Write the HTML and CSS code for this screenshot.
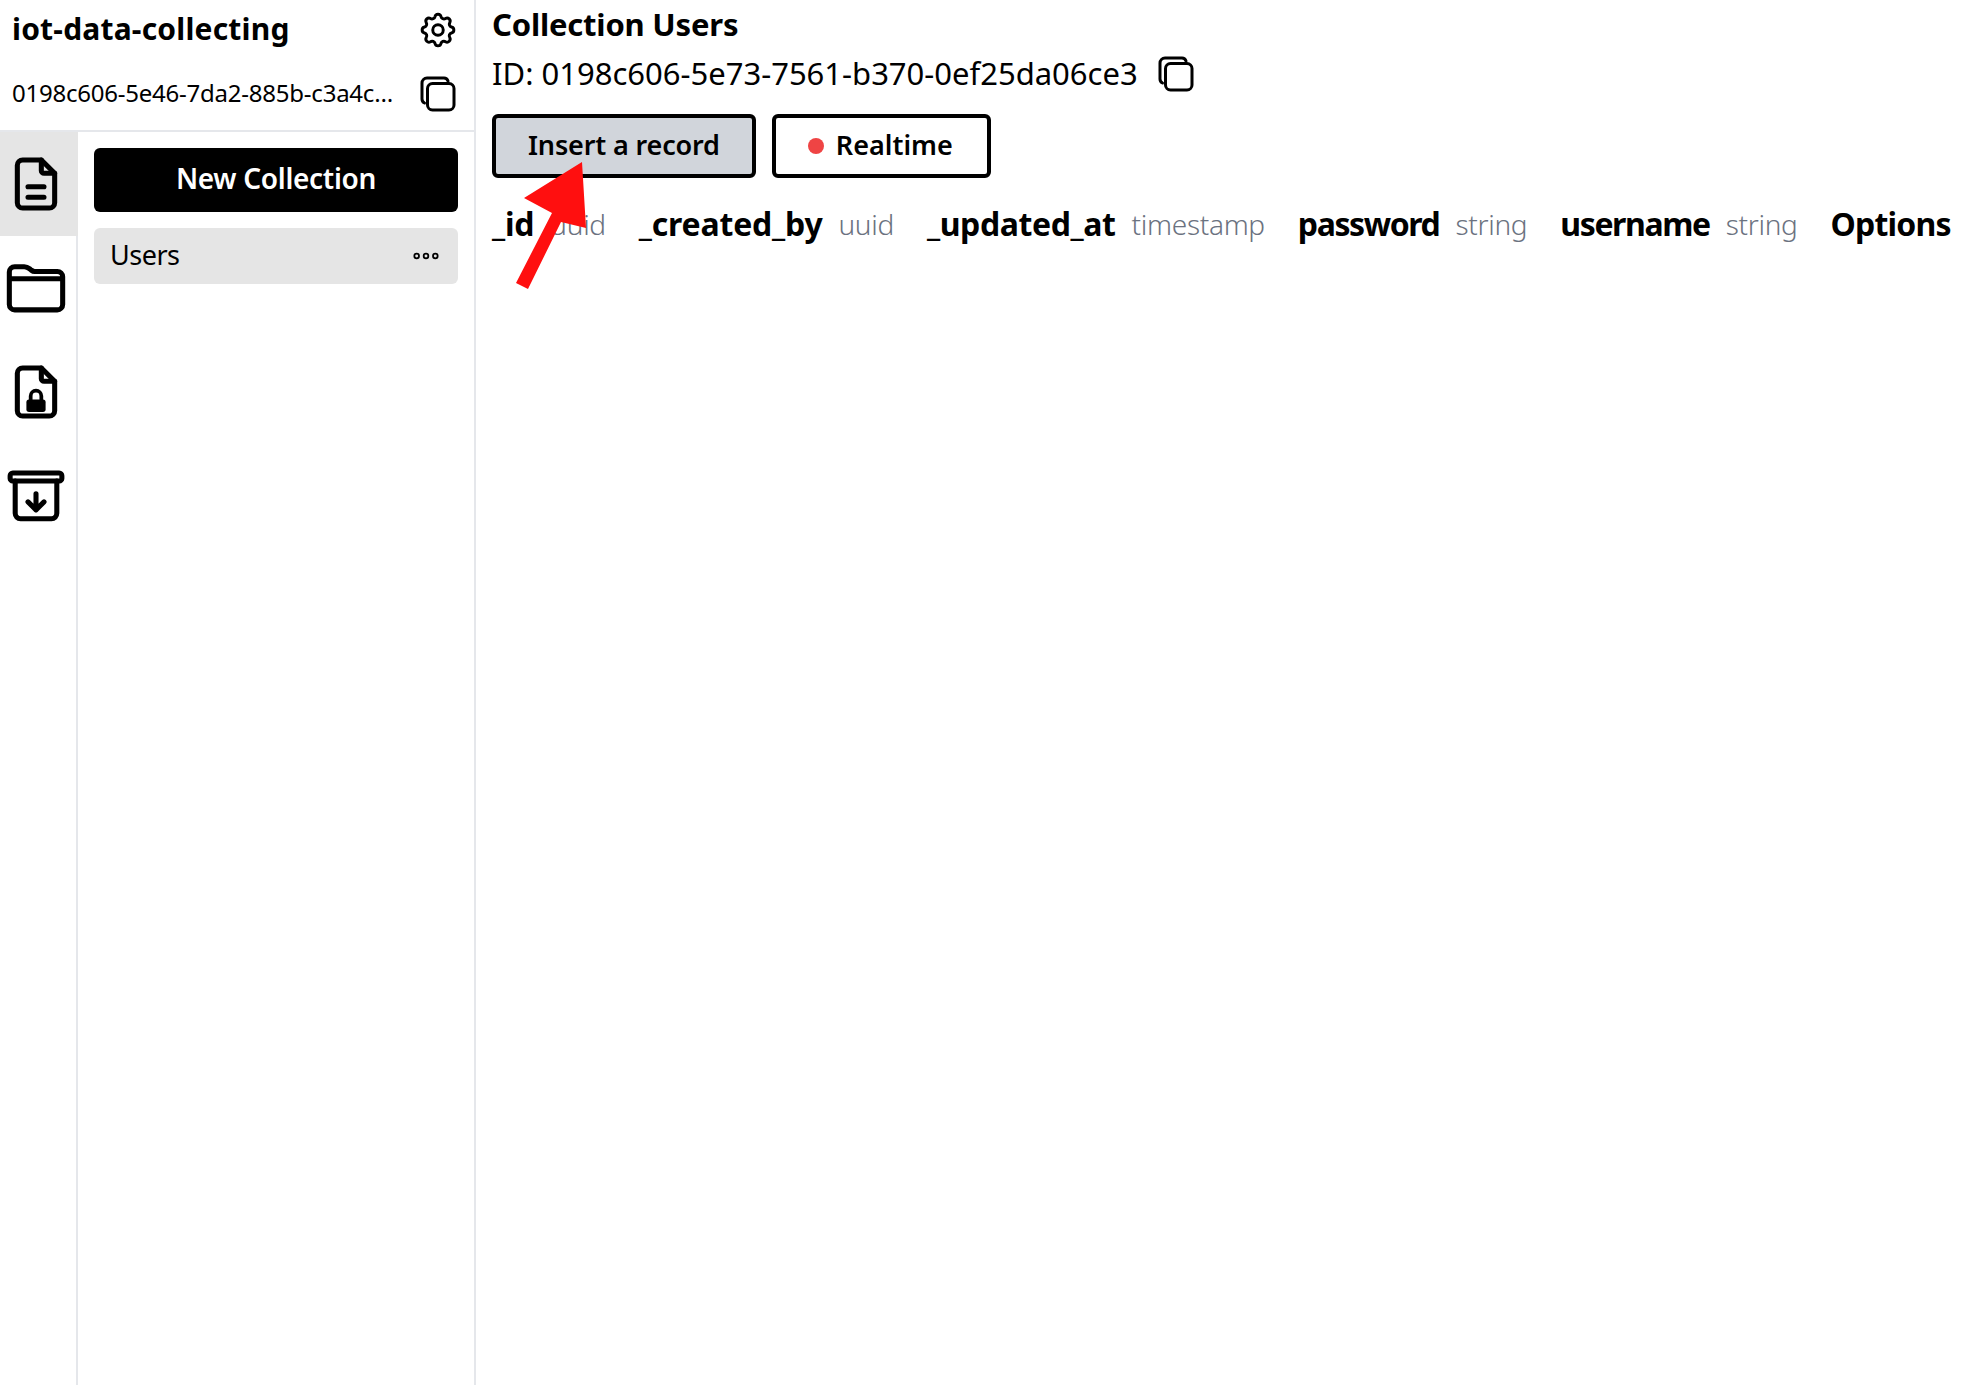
FILE: index.html
```html
<!DOCTYPE html>
<html>
<head>
    <link rel="stylesheet" href="styles.css">
</head>
<body>
    <div class="app">
        <!-- Barra lateral -->
        <aside class="sidebar">
            <div class="project">
                <div class="project-row">
                    <h1 class="project-name">iot-data-collecting</h1>
                    <svg class="icon-tool" viewBox="0 0 24 24"><path d="M10.3 4.3c.4-1.8 3-1.8 3.4 0a1.7 1.7 0 0 0 2.6 1.1c1.5-.9 3.3.8 2.4 2.4a1.7 1.7 0 0 0 1 2.5c1.8.4 1.8 3 0 3.4a1.7 1.7 0 0 0-1 2.6c.9 1.5-.9 3.3-2.4 2.4a1.7 1.7 0 0 0-2.6 1c-.4 1.8-3 1.8-3.4 0a1.7 1.7 0 0 0-2.6-1c-1.5.9-3.3-.9-2.4-2.4a1.7 1.7 0 0 0-1-2.6c-1.8-.4-1.8-3 0-3.4a1.7 1.7 0 0 0 1-2.5c-.9-1.6.9-3.3 2.4-2.4 1 .6 2.3.1 2.6-1.1z"/><circle cx="12" cy="12" r="3"/></svg>
                </div>
                <div class="project-row">
                    <span class="project-id">0198c606-5e46-7da2-885b-c3a4c…</span>
                    <svg class="icon-copy" viewBox="0 0 36 36"><rect x="7.500" y="7.500" width="26.500" height="26.500" rx="5"/><path d="M4.500 27A4.500 4.500 0 0 1 2 23V7a5 5 0 0 1 5-5h17a4.500 4.500 0 0 1 4 3"/></svg>
                </div>
            </div>
            <div class="sidebar-body">
                <nav class="rail">
                    <div class="rail-item active">
                        <svg viewBox="0 0 24 24"><path d="M14 3v4a1 1 0 0 0 1 1h4"/><path d="M17 21H7a2 2 0 0 1-2-2V5a2 2 0 0 1 2-2h7l5 5v11a2 2 0 0 1-2 2z"/><path d="M9 13h6M9 17h6"/></svg>
                    </div>
                    <div class="rail-item">
                        <svg viewBox="0 0 24 24"><path d="M2 8.500V6a2 2 0 0 1 2-2h3.600c.8 0 1.400.3 2 .8l.6.5c.4.3.8.5 1.300.5H20a2 2 0 0 1 2 2v10.400a2 2 0 0 1-2 2H4a2 2 0 0 1-2-2zM2 8.500h20"/></svg>
                    </div>
                    <div class="rail-item">
                        <svg viewBox="0 0 24 24"><path d="M14 3v4a1 1 0 0 0 1 1h4"/><path d="M17 21H7a2 2 0 0 1-2-2V5a2 2 0 0 1 2-2h7l5 5v11a2 2 0 0 1-2 2z"/><rect class="solid" x="8.400" y="14.800" width="7.200" height="4.700" rx="1"/><path class="shackle" d="M10 15v-1.500a2 2 0 0 1 4 0V15"/></svg>
                    </div>
                    <div class="rail-item">
                        <svg viewBox="0 0 24 24"><rect x="2.300" y="3.400" width="19.400" height="3" rx="1"/><path d="M4.200 6.400V18.500a2 2 0 0 0 2 2h11.600a2 2 0 0 0 2-2V6.400"/><path d="M12 11.200v6M9 14.200l3 3 3-3"/></svg>
                    </div>
                </nav>
                <div class="collections">
                    <button class="btn-new">New Collection</button>
                    <div class="collection-item">
                        <span>Users</span>
                        <svg class="dots" viewBox="0 0 24 10"><circle cx="4" cy="5" r="2"/><circle cx="12" cy="5" r="2"/><circle cx="20" cy="5" r="2"/></svg>
                    </div>
                </div>
            </div>
        </aside>

        <!-- Conteúdo -->
        <main class="content">
            <h2 class="title">Collection Users</h2>
            <div class="id-row">
                <span>ID: 0198c606-5e73-7561-b370-0ef25da06ce3</span>
                <svg class="icon-copy" viewBox="0 0 36 36"><rect x="7.500" y="7.500" width="26.500" height="26.500" rx="5"/><path d="M4.500 27A4.500 4.500 0 0 1 2 23V7a5 5 0 0 1 5-5h17a4.500 4.500 0 0 1 4 3"/></svg>
            </div>
            <div class="actions">
                <button class="btn btn-insert">Insert a record</button>
                <button class="btn btn-realtime"><span class="rec-dot"></span>Realtime</button>
            </div>
            <div class="columns">
                <div class="col"><b>_id</b><span>uuid</span></div>
                <div class="col"><b>_created_by</b><span>uuid</span></div>
                <div class="col"><b class="tight">_updated_at</b><span>timestamp</span></div>
                <div class="col"><b class="tighter">password</b><span>string</span></div>
                <div class="col"><b class="tighter">username</b><span>string</span></div>
                <div class="col"><b class="col-options">Options</b></div>
            </div>
        </main>
    </div>

    <!-- Seta de anotação -->
    <svg class="arrow" viewBox="0 0 1988 1385"><polygon points="582,162 524,198 552,213 516,283 528,289 561,222 586,228"/></svg>
</body>
</html>
```

FILE: styles.css
```css
* {
    box-sizing: border-box;
}
body {
    margin: 0;
    height: 1385px;
    overflow: hidden;
    background: white;
    color: black;
    font-family: "Noto Sans", sans-serif;
}
svg {
    fill: none;
    stroke: black;
    stroke-width: 1.7;
    stroke-linecap: round;
    stroke-linejoin: round;
    flex: none;
}
.app {
    display: flex;
    height: 100%;
}
.sidebar {
    width: 476px;
    flex: none;
    display: flex;
    flex-direction: column;
    border-right: 2px solid #e5e7eb;
}
.project {
    height: 132px;
    padding-left: 12px;
    padding-right: 18px;
    border-bottom: 2px solid #e5e7eb;
}
.project-row {
    display: flex;
    align-items: center;
    justify-content: space-between;
    height: 60px;
}
.project-row + .project-row {
    height: 36px;
    margin-top: 16px;
}
.project-name {
    margin: 0 0 3px;
    font-size: 30px;
    font-weight: 700;
    letter-spacing: 0.2px;
}
.project-id {
    font-size: 24px;
    letter-spacing: -0.23px;
    white-space: nowrap;
    padding-bottom: 4px;
}
.icon-tool {
    width: 42px;
    height: 42px;
    margin-right: -3px;
}
.icon-copy {
    width: 36px;
    height: 36px;
    stroke-width: 3;
}
.sidebar-body {
    flex: 1;
    display: flex;
}
.rail {
    width: 78px;
    flex: none;
    border-right: 2px solid #e5e7eb;
}
.rail-item {
    width: 72px;
    height: 104px;
    display: flex;
    align-items: center;
    justify-content: center;
}
.rail-item.active {
    background: #e5e5e5;
    width: 78px;
    padding-right: 6px;
}
.rail-item svg {
    width: 64px;
    height: 64px;
    stroke-width: 1.9;
}
.rail-item .solid {
    fill: black;
    stroke: none;
}
.rail-item .shackle {
    stroke-width: 1.4;
}
.collections {
    flex: 1;
    padding: 16px;
    display: flex;
    flex-direction: column;
    gap: 16px;
}
.btn-new {
    height: 64px;
    padding-bottom: 6px;
    background: black;
    color: white;
    border: none;
    border-radius: 6px;
    font-family: inherit;
    font-size: 28px;
    font-weight: 600;
    letter-spacing: -0.3px;
}
.collection-item {
    height: 56px;
    padding: 0 18px 4px 16px;
    background: #e5e5e5;
    border-radius: 6px;
    display: flex;
    align-items: center;
    justify-content: space-between;
    font-size: 27px;
    letter-spacing: -0.5px;
}
.dots {
    width: 28px;
    height: 12px;
    stroke-width: 1.5;
    margin-top: 4px;
}
.content {
    flex: 1;
    padding: 3px 16px 4px;
}
.title {
    margin: 0;
    font-size: 31px;
    font-weight: 700;
    line-height: 42px;
    letter-spacing: -0.2px;
}
.id-row {
    display: flex;
    align-items: center;
    gap: 20px;
    height: 48px;
    margin-top: 5px;
    font-size: 31px;
}
.id-row span {
    padding-bottom: 2px;
}
.actions {
    display: flex;
    gap: 16px;
    margin-top: 16px;
}
.btn {
    height: 64px;
    padding: 0 32px 4px;
    display: flex;
    align-items: center;
    gap: 12px;
    background: white;
    border: 4px solid black;
    border-radius: 6px;
    color: black;
    font-family: inherit;
    font-size: 27px;
    font-weight: 600;
}
.btn-insert {
    background: #d1d5db;
    letter-spacing: -0.15px;
}
.btn-realtime {
    padding-right: 34px;
}
.rec-dot {
    width: 16px;
    height: 16px;
    margin-top: 4px;
    border-radius: 50%;
    background: #ef4444;
}
.columns {
    display: flex;
    gap: 33px;
    margin-top: 24px;
    font-size: 32px;
    line-height: 44px;
}
.col {
    display: flex;
    gap: 16px;
    white-space: nowrap;
}
.col b {
    font-weight: 700;
    letter-spacing: -0.2px;
}
.col b.tight {
    letter-spacing: -0.4px;
}
.col b.tighter {
    letter-spacing: -1.4px;
}
.col b.col-options {
    letter-spacing: -0.8px;
}
.col span {
    font-size: 28px;
    color: #6b7280;
    font-weight: 300;
    letter-spacing: -0.3px;
}
.arrow {
    position: absolute;
    left: 0;
    top: 0;
    width: 1988px;
    height: 1385px;
    stroke: none;
    fill: #ff0f0f;
    pointer-events: none;
}
```
